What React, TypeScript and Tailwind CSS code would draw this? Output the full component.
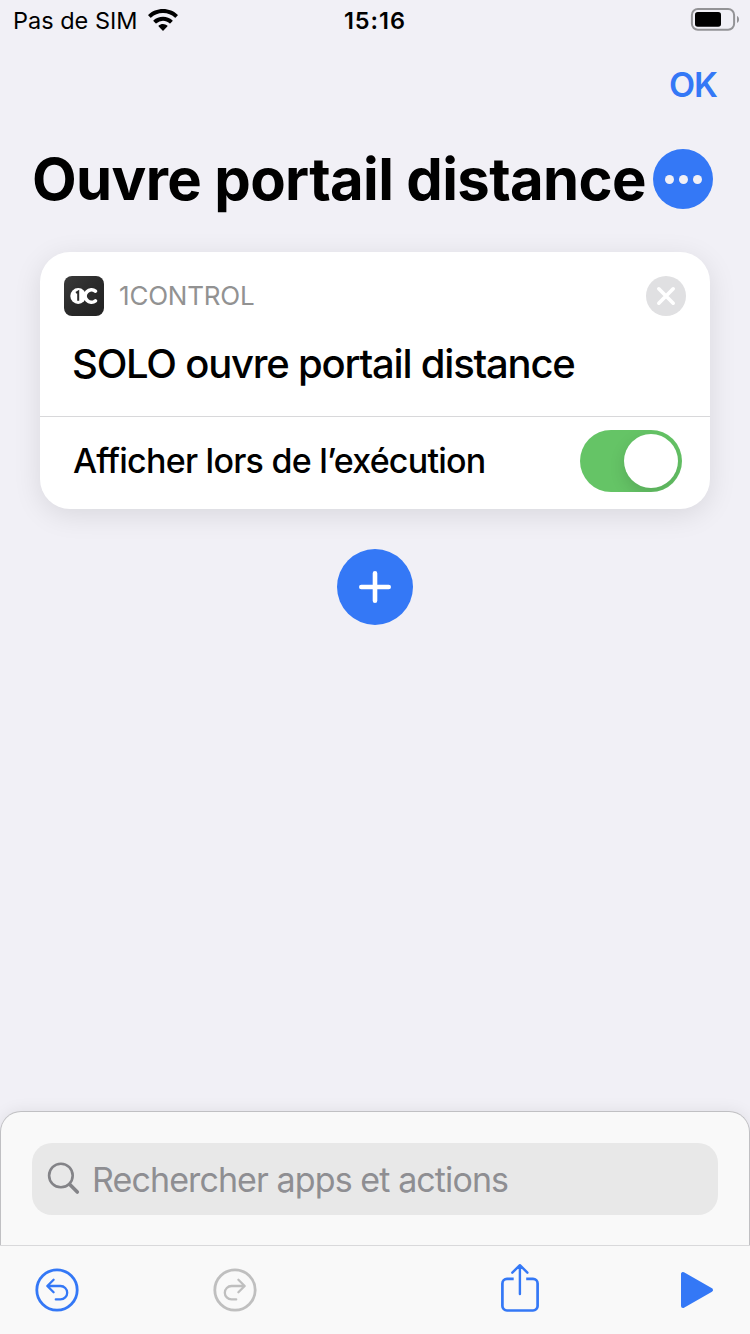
import React from "react";

const WifiIcon = () => (
  <svg width="30" height="22" viewBox="0 0 30 22" fill="currentColor">
    <path d="M15 0C9.200 0 4 2.200 0.400 5.700a.6.6 0 0 0 0 .9l1.900 1.900a.7.7 0 0 0 .9 0A17 17 0 0 1 15 4a17 17 0 0 1 11.800 4.500.7.7 0 0 0 .9 0l1.900-1.900a.6.6 0 0 0 0-.9C26 2.200 20.800 0 15 0Z" />
    <path d="M15 7.700c-3.700 0-7 1.400-9.400 3.600a.6.6 0 0 0 0 .9l2 2a.7.7 0 0 0 .9 0A9.700 9.700 0 0 1 15 11.700c2.500 0 4.700.9 6.500 2.500a.7.7 0 0 0 .9 0l2-2a.6.6 0 0 0 0-.9A13.800 13.800 0 0 0 15 7.700Z" />
    <path d="M15 15c-1.700 0-3.200.6-4.300 1.600a.6.6 0 0 0 0 .9l3.800 3.900a.7.7 0 0 0 1 0l3.800-3.900a.6.6 0 0 0 0-.9A6.500 6.500 0 0 0 15 15Z" />
  </svg>
);

const BatteryIcon = () => (
  <svg width="50" height="24" viewBox="0 0 50 24">
    <rect x="1.900" y="1" width="42.200" height="20.800" rx="6" fill="none" stroke="#939396" strokeWidth="2" />
    <rect x="5" y="4" width="26" height="14.800" rx="2.800" fill="#000" />
    <path d="M47 8c1.300.5 2 1.800 2 3.400s-.7 2.900-2 3.400Z" fill="#939396" />
  </svg>
);

const AppIcon = () => (
  <div className="flex size-10 items-center justify-center rounded-[8px] bg-linear-to-br from-[#3a3a3a] via-[#2a2a2a] to-[#222222]">
    <svg width="28" height="16" viewBox="0 0 28 16">
      <circle cx="8.200" cy="8" r="7.900" fill="#fff" />
      <circle cx="20.500" cy="8" r="5.500" fill="#2b2b2b" />
      <path d="M25.400 3.200A6.200 6.200 0 1 0 25.400 12.800" fill="none" stroke="#fff" strokeWidth="3.600" strokeLinecap="round" />
      <path d="M6 4.900 8.200 3.500V12.800" fill="none" stroke="#2b2b2b" strokeWidth="2" />
    </svg>
  </div>
);

const SearchIcon = () => (
  <svg width="34" height="34" viewBox="0 0 34 34" fill="none" stroke="#838387">
    <circle cx="13.900" cy="13.500" r="11.800" strokeWidth="2.600" />
    <path d="M22.600 22.300 30.300 30" strokeWidth="3.600" strokeLinecap="round" />
  </svg>
);

const UndoIcon = ({ flipped = false }: { flipped?: boolean }) => (
  <svg
    width="44"
    height="44"
    viewBox="0 0 44 44"
    fill="none"
    stroke="currentColor"
    strokeLinecap="round"
    strokeLinejoin="round"
    className={flipped ? "-scale-x-100" : ""}
  >
    <circle cx="22" cy="22" r="20.200" strokeWidth="2.800" />
    <path d="M18.600 11.800 12.300 18 18.600 24.200M12.800 18H25.500a6.700 6.700 0 0 1 0 13.400H20.800" strokeWidth="2.300" />
  </svg>
);

const ShareIcon = () => (
  <svg
    width="40"
    height="50"
    viewBox="0 0 40 50"
    fill="none"
    stroke="currentColor"
    strokeWidth="2.700"
    strokeLinecap="round"
    strokeLinejoin="round"
  >
    <path d="M13.700 15.900H7a4.600 4.600 0 0 0-4.600 4.600V42.900A4.600 4.600 0 0 0 7 47.500H33a4.600 4.600 0 0 0 4.600-4.600V20.500a4.600 4.600 0 0 0-4.600-4.600H26.200" strokeLinecap="butt" />
    <path d="M19.900 31V2.500M12.300 9.700 19.900 2.200 27.400 9.700" strokeWidth="2.400" />
  </svg>
);

export default function App() {
  return (
    <div className="flex h-[1334px] w-[750px] flex-col overflow-hidden bg-[#f1f0f6] font-['Inter',sans-serif] text-black">
      {/* Status bar */}
      <header className="grid h-10 grid-cols-3 items-center pr-[10px] pl-[13px] text-2xl leading-10">
        <div className="flex items-center gap-[10px]">
          <span className="pt-[2px] text-[23.500px] leading-[38px] whitespace-nowrap">Pas de SIM</span>
          <WifiIcon />
        </div>
        <span className="-ml-[3px] pt-[2px] text-center text-[23.500px] leading-[38px] font-semibold tracking-[1px]">15:16</span>
        <div className="flex justify-end">
          <BatteryIcon />
        </div>
      </header>

      <nav className="flex h-[88px] items-center justify-end pr-[33px]">
        <button className="text-[34px] font-semibold tracking-[-1px] text-[#3478f6]">OK</button>
      </nav>

      {/* Title */}
      <div className="flex h-[124px] shrink-0 items-start justify-between pt-[21px] pr-[37px] pl-8">
        <h1 className="text-[58px] leading-[60px] font-bold tracking-[-0.640px] whitespace-nowrap">
          Ouvre portail distance
        </h1>
        <button className="flex size-[60px] shrink-0 items-center justify-center gap-[5px] rounded-full bg-[#3478f6]">
          <span className="size-[9px] rounded-full bg-[#f1f0f6]" />
          <span className="size-[9px] rounded-full bg-[#f1f0f6]" />
          <span className="size-[9px] rounded-full bg-[#f1f0f6]" />
        </button>
      </div>

      <main className="flex flex-1 flex-col items-center">
        {/* Action card */}
        <section className="h-[257px] w-[670px] rounded-[30px] bg-white shadow-[0_6px_28px_rgba(0,0,0,0.1)]">
          <div className="flex h-16 items-end pr-6 pl-6">
            <AppIcon />
            <span className="ml-[15px] flex-1 text-[26px] leading-10 tracking-[-0.2px] text-[#929292]">1CONTROL</span>
            <button className="flex size-10 items-center justify-center rounded-full bg-[#e0e0e2]">
              <svg width="20" height="20" viewBox="0 0 20 20" stroke="#fff" strokeWidth="3.600" strokeLinecap="round">
                <path d="M2.800 2.800 17.200 17.200M17.200 2.800 2.800 17.200" />
              </svg>
            </button>
          </div>
          <p className="h-[100px] pt-6 pl-8 text-[40px] leading-[48px] font-medium tracking-[-1.210px] whitespace-nowrap">
            SOLO ouvre portail distance
          </p>
          <div className="flex h-[92px] items-center justify-between border-t border-[#d8d8da] pr-7 pb-[3px] pl-[33px]">
            <span className="text-[34px] leading-10 font-medium tracking-[-0.750px] whitespace-nowrap">
              Afficher lors de l’exécution
            </span>
            <div className="flex h-[62px] w-[102px] items-center justify-end overflow-hidden rounded-full bg-[#65c466] pr-1">
              <div className="size-[54px] rounded-full bg-white shadow-[0_6px_16px_rgba(0,0,0,0.13)]" />
            </div>
          </div>
        </section>

        <button className="mt-10 flex size-[76px] items-center justify-center rounded-full bg-[#3478f6]">
          <svg width="34" height="34" viewBox="0 0 34 34" stroke="#fff" strokeWidth="4.600" strokeLinecap="round">
            <path d="M17 3.300V30.700M3.300 17H30.700" />
          </svg>
        </button>
      </main>

      {/* Search sheet */}
      <section className="h-[134px] shrink-0 rounded-t-[21px] border border-b-0 border-[#c0c0c3] bg-[#f9f9f9] px-[31px] pt-[31px] shadow-[0_0_16px_rgba(0,0,0,0.08)]">
        <div className="flex h-[72px] items-center rounded-[20px] bg-[#e8e8e8] pl-[15px]">
          <SearchIcon />
          <span className="ml-[11px] text-[34px] tracking-[-0.900px] whitespace-nowrap text-[#8e8e92]">
            Rechercher apps et actions
          </span>
        </div>
      </section>

      {/* Toolbar */}
      <footer className="flex h-[89px] shrink-0 items-center border-t border-[#d9d9db] bg-[#f9f9f9] pl-[34.500px] text-[#3478f6]">
        <UndoIcon />
        <div className="ml-[134px] text-[#bfbfbf]">
          <UndoIcon flipped />
        </div>
        <div className="-mt-[4px] ml-[243px]">
          <ShareIcon />
        </div>
        <svg className="ml-[140px]" width="36" height="38" viewBox="0 0 36 38" fill="currentColor" stroke="currentColor" strokeWidth="4" strokeLinejoin="round">
          <path d="M3 3V35L31 19Z" />
        </svg>
      </footer>
    </div>
  );
}
